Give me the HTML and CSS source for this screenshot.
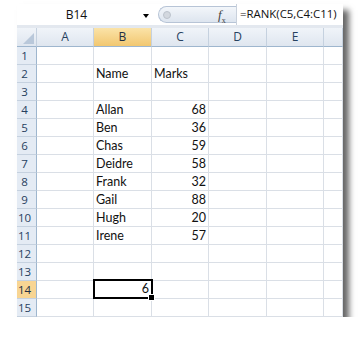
FILE: index.html
```html
<!DOCTYPE html>
<html>
  <head>
    <title>RANK example</title>
    <meta name="viewport" content="width=device-width,initial-scale=1">
    <link rel="stylesheet" href="styles.css">
  </head>
  <body>
    <div class="window">
      <div class="formula-bar">
        <div class="name-box">
          <span class="cell-ref">B14</span>
          <span class="arrow"></span>
        </div>
        <div class="pill">
          <svg width="10" height="10" viewBox="0 0 10 10">
            <circle cx="5" cy="5" r="3.5" fill="#d3d8df" stroke="#bcc3cc"/>
          </svg>
        </div>
        <div class="fx"><i>f</i><sub>x</sub></div>
        <div class="formula">=RANK(C5,C4:C11)</div>
      </div>

      <div class="sheet">
        <div class="corner"><span class="tri"></span></div>
        <div class="col-head">A</div>
        <div class="col-head active">B</div>
        <div class="col-head">C</div>
        <div class="col-head">D</div>
        <div class="col-head">E</div>
        <div class="col-head"></div>
      </div>
      <div class="sheet rows"></div>
    </div>

    <script>
      const data = {
        2: ["Name", "Marks"],
        4: ["Allan", 68],
        5: ["Ben", 36],
        6: ["Chas", 59],
        7: ["Deidre", 58],
        8: ["Frank", 32],
        9: ["Gail", 88],
        10: ["Hugh", 20],
        11: ["Irene", 57]
      }
      const rows = document.querySelector(".rows")

      for (let r = 1; r <= 15; r++) {
        let head = document.createElement("div")
        head.className = "row-head" + (r == 14 ? " active" : "")
        head.innerText = r
        rows.appendChild(head)

        for (let c = 0; c < 6; c++) {
          let cell = document.createElement("div")
          cell.className = "cell"
          let row = data[r]
          if (row && c == 1) cell.innerText = row[0]
          if (row && c == 2) {
            cell.innerText = row[1]
            if (typeof row[1] == "number") cell.classList.add("num")
          }
          if (r == 14 && c == 1) {
            cell.innerText = 6
            cell.classList.add("num", "selected")
          }
          rows.appendChild(cell)
        }
      }
    </script>
  </body>
</html>
```

FILE: styles.css
```css
* {
  box-sizing: border-box;
  margin: 0;
  padding: 0;
}

body {
  background: #fff;
  font-family: Lato, "Open Sans", sans-serif;
  font-size: 12.5px;
  color: #111;
}

.window {
  width: 326px;
  margin: 4px 0 0 17px;
  background: #fff;
  box-shadow: 6px 6px 6px rgba(0, 0, 0, 0.6);
}

.formula-bar {
  display: flex;
  align-items: center;
  height: 24px;
  border-bottom: 3px solid #e3e8ef;
  background: #fff;
}

.name-box {
  width: 135px;
  display: flex;
  align-items: center;
  justify-content: center;
  padding-right: 16px;
  position: relative;
  font-family: "Open Sans", sans-serif;
  font-size: 12px;
}
.arrow {
  position: absolute;
  right: 3px;
  top: 8px;
  border-left: 3px solid transparent;
  border-right: 3px solid transparent;
  border-top: 4px solid #000;
}

.pill {
  width: 60px;
  height: 17px;
  margin-left: 6px;
  border: 1px solid #b7c4d6;
  border-right: none;
  border-radius: 9px 0 0 9px;
  background: linear-gradient(#f3f6fa, #dde5ef);
  display: flex;
  align-items: center;
  padding-left: 3px;
}

.fx {
  width: 18px;
  height: 17px;
  font-family: "Liberation Serif", serif;
  font-size: 13px;
  color: #444;
  background: linear-gradient(#f3f6fa, #dde5ef);
  border-top: 1px solid #b7c4d6;
  border-bottom: 1px solid #b7c4d6;
  line-height: 15px;
}
.fx sub {
  font-size: 8px;
}

.formula {
  flex: 1;
  height: 21px;
  border-left: 1px solid #c9d1dc;
  padding-left: 3px;
  line-height: 20px;
  font-family: "Open Sans", sans-serif;
  font-size: 11.4px;
  white-space: nowrap;
  overflow: hidden;
}

.sheet {
  display: grid;
  grid-template-columns: 20px 57px 58px 57px 58px 57px 19px;
}

.corner,
.col-head {
  height: 19px;
  background: linear-gradient(#f0f4f9, #dfe6ef);
  border-right: 1px solid #c5d1df;
  border-bottom: 1px solid #9eb6ce;
}
.col-head {
  text-align: center;
  line-height: 18px;
  color: #27415f;
  font-family: "Open Sans", sans-serif;
  font-size: 12px;
}
.col-head.active {
  background: linear-gradient(#fbe3a8, #f2c770);
  color: #1f2f44;
}
.corner {
  position: relative;
}
.tri {
  position: absolute;
  right: 2px;
  bottom: 2px;
  border-left: 11px solid transparent;
  border-bottom: 11px solid #b9c8da;
}

.row-head {
  height: 18px;
  background: #e4ebf4;
  border-right: 1px solid #9eb6ce;
  border-bottom: 1px solid #c5d1df;
  color: #27415f;
  font-family: "Open Sans", sans-serif;
  font-size: 11.5px;
  line-height: 17px;
  text-align: center;
  padding-right: 4px;
}
.row-head.active {
  background: #f8d593;
  color: #1f2f44;
}

.cell {
  height: 18px;
  border-right: 1px solid #dadfe6;
  border-bottom: 1px solid #dadfe6;
  padding: 0 2px;
  line-height: 17px;
  white-space: nowrap;
}
.cell.num {
  text-align: right;
}
.cell.selected {
  position: relative;
  margin: -2px -1px 0 -1px;
  height: 20px;
  border: 2px solid #000;
  line-height: 16px;
}
.cell.selected::after {
  content: "";
  position: absolute;
  right: -4px;
  bottom: -4px;
  width: 5px;
  height: 5px;
  background: #000;
  border: 1px solid #fff;
}
```
